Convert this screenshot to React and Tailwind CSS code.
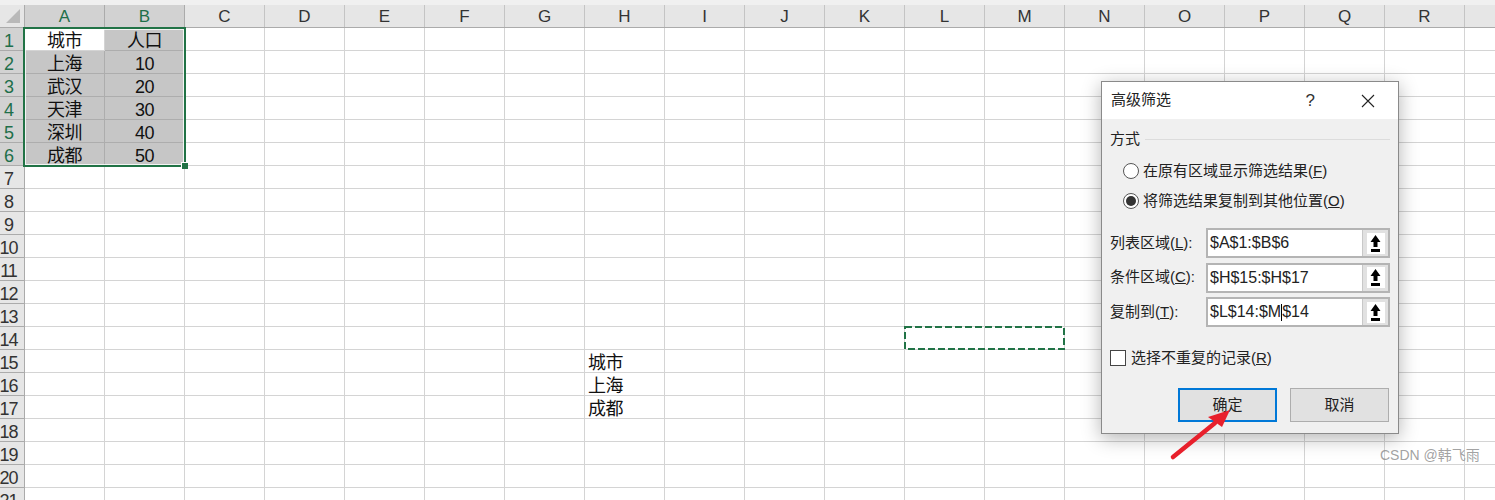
const FONT = "font-['Liberation_Sans','Noto_Sans_CJK_SC',sans-serif]";
const COLS = 'ABCDEFGHIJKLMNOPQR'.split('');
const ROWS = Array.from({ length: 21 }, (_, i) => i + 1);

const CELLS = {
  A1: '城市', B1: '人口',
  A2: '上海', B2: '10',
  A3: '武汉', B3: '20',
  A4: '天津', B4: '30',
  A5: '深圳', B5: '40',
  A6: '成都', B6: '50',
  H15: '城市', H16: '上海', H17: '成都',
};

function Cell({ col, row }) {
  const id = col + row;
  const text = CELLS[id];
  const inTable = (col === 'A' || col === 'B') && row <= 6;
  const shaded = inTable && id !== 'A1';
  const leftAlign = col === 'H';
  return (
    <div
      className={`w-[80px] h-[23px] shrink-0 border-r border-b pt-[3px] flex items-center text-[18px] leading-none tracking-[-0.5px] text-[#111111] ${
        shaded ? 'bg-[#c6c6c6] border-[#adadad]' : 'bg-white border-[#d4d4d4]'
      } ${leftAlign ? 'justify-start pl-[3px]' : 'justify-center'}`}
    >
      {text}
    </div>
  );
}

function ColumnHeader() {
  return (
    <div className="flex h-[23px] border-b border-[#ababab] bg-[#e6e6e6]">
      <div className="w-[25px] shrink-0 border-r border-[#ababab] relative">
        <svg width="16" height="16" className="absolute right-[3px] bottom-[3px]" viewBox="0 0 16 16">
          <polygon points="15,1 15,15 1,15" fill="#b9b9b9" />
        </svg>
      </div>
      {COLS.map((c) => (
        <div
          key={c}
          className={`w-[80px] shrink-0 border-r pt-[1px] flex items-center justify-center text-[17px] leading-none ${
            c === 'A' || c === 'B' ? 'bg-[#d2d2d2] text-[#1f6f4a] border-[#ababab]' : 'text-[#333333] border-[#c4c4c4]'
          }`}
        >
          {c}
        </div>
      ))}
      <div className="flex-1" />
    </div>
  );
}

function RowHeader({ row }) {
  const active = row <= 6;
  return (
    <div
      className={`w-[25px] h-[23px] shrink-0 border-r border-b border-[#ababab] pt-[3px] pr-[7px] flex items-center justify-center text-[18px] leading-none tracking-[-1px] ${
        active ? 'bg-[#d2d2d2] text-[#1f6f4a]' : 'bg-[#e6e6e6] text-[#333333]'
      }`}
    >
      {row}
    </div>
  );
}

function RefButton() {
  return (
    <div className="w-[26px] h-full border-l border-[#c8c8c8] bg-[#e1e1e1] flex items-center justify-center shrink-0">
      <div className="w-[18px] h-[21px] bg-white flex items-center justify-center">
        <svg width="11" height="17" viewBox="0 0 11 17">
          <polygon points="5.5,0 10.5,7 7.5,7 7.5,12 3.5,12 3.5,7 0.5,7" fill="#000" />
          <rect x="1" y="14" width="9" height="3" fill="#000" />
        </svg>
      </div>
    </div>
  );
}

function RefRow({ label, hotkey, value, caret }) {
  return (
    <div className="flex items-center h-[30px]">
      <div className="w-[96px] shrink-0 text-[15px] text-[#222222] whitespace-nowrap">
        {label}(<span className="underline">{hotkey}</span>):
      </div>
      <div className="w-[184px] h-[30px] border-2 border-[#b4b4b4] bg-white flex items-center">
        <div className="flex-1 pl-[2px] text-[16px] text-[#222222] whitespace-nowrap">
          {value}
          {caret}
        </div>
        <RefButton />
      </div>
    </div>
  );
}

function Radio({ checked, label, hotkey }) {
  return (
    <div className="flex items-center h-[20px]">
      <div className="w-[16px] h-[16px] rounded-full border border-[#555555] bg-white flex items-center justify-center shrink-0">
        {checked && <div className="w-[10px] h-[10px] rounded-full bg-[#333333]" />}
      </div>
      <div className="ml-[4px] text-[15px] text-[#222222] whitespace-nowrap">
        {label}(<span className="underline">{hotkey}</span>)
      </div>
    </div>
  );
}

function Dialog() {
  return (
    <div className="absolute left-[1101px] top-[81px] w-[298px] h-[353px] border border-[#8a8a8a] bg-[#f0f0f0] shadow-[0_4px_18px_rgba(0,0,0,0.3)] flex flex-col">
      <div className="h-[37px] bg-white flex items-center pl-[9px] shrink-0">
        <div className="text-[15px] text-[#222222]">高级筛选</div>
        <div className="ml-auto mr-[46px] text-[17px] text-[#333333]">?</div>
        <svg width="14" height="14" viewBox="0 0 14 14" className="mr-[23px]">
          <path d="M1 1L13 13M13 1L1 13" stroke="#222222" strokeWidth="1.1" fill="none" />
        </svg>
      </div>
      <div className="flex-1 px-[8px] flex flex-col">
        <div className="flex items-center mt-[10px] h-[20px]">
          <div className="text-[15px] text-[#222222]">方式</div>
          <div className="flex-1 h-px bg-[#dcdcdc] ml-[5px]" />
        </div>
        <div className="ml-[13px] mt-[12px] flex flex-col gap-[10px]">
          <Radio label="在原有区域显示筛选结果" hotkey="F" />
          <Radio checked label="将筛选结果复制到其他位置" hotkey="O" />
        </div>
        <div className="mt-[17px] flex flex-col gap-[4.5px]">
          <RefRow label="列表区域" hotkey="L" value="$A$1:$B$6" />
          <RefRow label="条件区域" hotkey="C" value="$H$15:$H$17" />
          <RefRow label="复制到" hotkey="T" value="$L$14:$M" caret={<><span className="inline-block w-px h-[17px] bg-black align-middle" />$14</>} />
        </div>
        <div className="flex items-center mt-[21px] h-[20px]">
          <div className="w-[16px] h-[16px] border border-[#444444] bg-white" />
          <div className="ml-[5px] text-[15px] text-[#222222] whitespace-nowrap">
            选择不重复的记录(<span className="underline">R</span>)
          </div>
        </div>
        <div className="flex justify-end gap-[13px] mt-[20px] mr-[1px]">
          <div className="w-[99px] h-[34px] border-2 border-[#0078d7] bg-[#e1e1e1] flex items-center justify-center text-[15px] text-[#222222]">确定</div>
          <div className="w-[99px] h-[34px] border border-[#adadad] bg-[#e1e1e1] flex items-center justify-center text-[15px] text-[#222222]">取消</div>
        </div>
      </div>
    </div>
  );
}

export default function App() {
  return (
    <div className={`relative w-[1495px] h-[500px] overflow-hidden bg-white ${FONT}`}>
      <div className="h-[5px] bg-[#f0f0f0]" />
      <ColumnHeader />
      {ROWS.map((row) => (
        <div key={row} className="flex">
          <RowHeader row={row} />
          {COLS.map((col) => (
            <Cell key={col} col={col} row={row} />
          ))}
          <div className="flex-1 h-[23px] border-b border-[#d4d4d4]" />
        </div>
      ))}

      {/* selected range */}
      <div className="absolute left-[23px] top-[27px] w-[163px] h-[140px] border-2 border-[#217346]">
        <div className="h-full border border-white/80" />
      </div>
      <div className="absolute left-[181px] top-[162px] w-[7px] h-[7px] bg-[#217346] border-l border-t border-white" />

      {/* copy marquee */}
      <svg className="absolute left-[904px] top-[326px]" width="161" height="24" viewBox="0 0 161 24">
        <rect x="1" y="1" width="159" height="22" fill="none" stroke="#217346" strokeWidth="2" strokeDasharray="7 3" />
      </svg>

      <Dialog />

      {/* red arrow */}
      <svg className="absolute left-[1165px] top-[400px]" width="70" height="65" viewBox="0 0 70 65">
        <path d="M8 57L50 23" stroke="#e8202c" strokeWidth="4.5" strokeLinecap="round" />
        <polygon points="65,10 57,27 43,17" fill="#e8202c" />
      </svg>

      <div className="absolute left-[1380px] top-[448px] text-[14px] text-[#8a8a8a]/80 leading-none">CSDN @韩飞雨</div>
    </div>
  );
}
